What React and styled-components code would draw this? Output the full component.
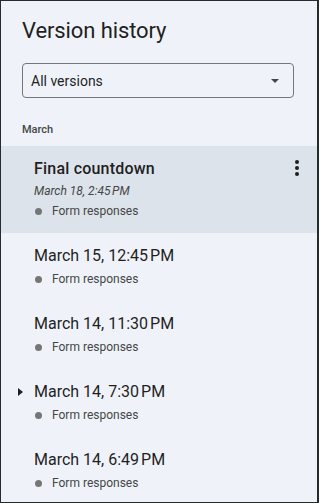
import styled, { createGlobalStyle } from 'styled-components';

const GlobalStyle = createGlobalStyle`
  html, body { margin:0; padding:0; }
  body { font-family: Roboto, "Noto Sans", sans-serif; color:#1f1f1f; }
`;

// narrow no-break space before AM/PM, as the date formatter gives it
const nb = '\u202F';

const versions = [
  { title: 'Final countdown', date: `March 18, 2:45${nb}PM`, named: true, selected: true },
  { title: `March 15, 12:45${nb}PM` },
  { title: `March 14, 11:30${nb}PM` },
  { title: `March 14, 7:30${nb}PM`, expand: true },
  { title: `March 14, 6:49${nb}PM` },
];

const App = () => {
  return (
    <>
      <GlobalStyle />
      <Panel>
        <Header>
          <Title>Version history</Title>
          <Select>
            <span>All versions</span>
            <Caret />
          </Select>
          <Month>March</Month>
        </Header>
        <List>
          {versions.map((v) => (
            <Row key={v.title} selected={v.selected}>
              {v.expand && <Expander />}
              <RowTitle named={v.named}>{v.title}</RowTitle>
              {v.date && <RowDate>{v.date}</RowDate>}
              <Meta>
                <Dot />
                Form responses
              </Meta>
              {v.selected && (
                <More>
                  <i /><i /><i />
                </More>
              )}
            </Row>
          ))}
        </List>
      </Panel>
    </>
  );
};

const Panel = styled.div`
  box-sizing:border-box;
  width:319px; height:503px;
  background:#eff3f9;
  border:1px solid #242c2c;
  border-right-width:2px;
  overflow:hidden;
`;
const Header = styled.div`
  padding:16px 23px 0 21px;
`;
const Title = styled.h1`
  margin:0;
  font-size:22px;
  font-weight:400;
  line-height:28px;
  letter-spacing:-0.1px;
`;
const Select = styled.div`
  margin-top:18px;
  height:35px;
  box-sizing:border-box;
  border:1px solid #747775;
  border-radius:4px;
  display:flex;
  align-items:center;
  justify-content:space-between;
  padding:0 14px 0 8px;
  font-size:14px;
  color:#1f1f1f;
`;
const Caret = styled.span`
  width:0; height:0;
  border-left:4px solid transparent;
  border-right:4px solid transparent;
  border-top:4px solid #444746;
`;
const Month = styled.div`
  margin-top:24px;
  font-size:11px;
  font-weight:500;
  line-height:16px;
  color:#444746;
`;
const List = styled.div`
  margin-top:8px;
`;
const Row = styled.div`
  position:relative;
  padding:12px 40px 12px 33px;
  background:${p => p.selected ? '#dde3ea' : 'transparent'};
`;
const Expander = styled.span`
  position:absolute;
  left:17px; top:19px;
  width:0; height:0;
  border-top:4px solid transparent;
  border-bottom:4px solid transparent;
  border-left:5px solid #1f1f1f;
`;
const RowTitle = styled.div`
  font-size:16px;
  line-height:22px;
  font-weight:${p => p.named ? 500 : 400};
  letter-spacing:${p => p.named ? '0.2px' : '0'};
  margin-bottom:2px;
`;
const RowDate = styled.div`
  font-size:12px;
  font-style:italic;
  line-height:19px;
  color:#444746;
`;
const Meta = styled.div`
  display:flex;
  align-items:center;
  gap:10px;
  font-size:12px;
  line-height:20px;
  color:#444746;
`;
const Dot = styled.span`
  width:7px; height:7px;
  margin-left:1px;
  border-radius:50%;
  background:#747775;
`;
const More = styled.div`
  position:absolute;
  right:18px; top:14px;
  display:flex;
  flex-direction:column;
  gap:2px;
  i {
    display:block;
    width:4px; height:4px;
    border-radius:50%;
    background:#1f1f1f;
  }
`;

export default App;
